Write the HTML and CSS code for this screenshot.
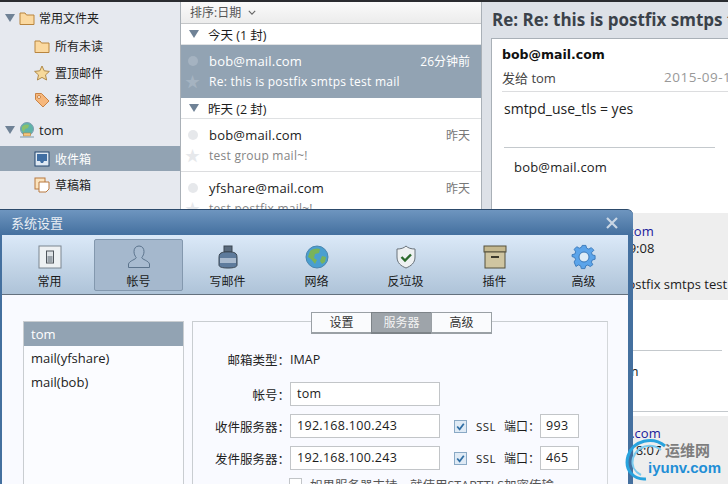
FILE: index.html
```html
<!DOCTYPE html>
<html lang="zh-CN">
<head>
    <meta charset="UTF-8">
    <meta name="viewport" content="width=device-width, initial-scale=1.0">
    <title>系统设置</title>
    <link rel="stylesheet" href="styles.css">
</head>
<body>
    <div class="app">
        <div class="sidebar">
            <div class="tree-row top-row">
                <span class="arrow"></span>
                <svg class="ico" viewBox="0 0 16 16"><path d="M1 3h5l1.500 2H15v9.500H1z" fill="#fbd9a0" stroke="#b8853f"/></svg>
                <span>常用文件夹</span>
            </div>
            <div class="tree-row child">
                <svg class="ico" viewBox="0 0 16 16"><path d="M1 3h5l1.500 2H15v9.500H1z" fill="#fbd9a0" stroke="#b8853f"/></svg>
                <span>所有未读</span>
            </div>
            <div class="tree-row child">
                <svg class="ico" viewBox="0 0 16 16"><path d="M8 1l2.200 4.800 5.200.6-3.900 3.500 1.100 5.100L8 12.400 3.400 15l1.100-5.100L.6 6.400l5.200-.6z" fill="#f7d99a" stroke="#b08a4a"/></svg>
                <span>置顶邮件</span>
            </div>
            <div class="tree-row child">
                <svg class="ico" viewBox="0 0 16 16"><path d="M1.500 1.500h6l7.500 7.500-6 6-7.500-7.500z" fill="#f6b77c" stroke="#c98345"/><circle cx="5" cy="5" r="1.500" fill="#fff" stroke="#c98345"/></svg>
                <span>标签邮件</span>
            </div>
            <div class="tree-row account">
                <span class="arrow"></span>
                <svg class="ico" viewBox="0 0 16 16"><circle cx="8" cy="7" r="6.500" fill="#5fb3a8" stroke="#7d9cb0"/><path d="M3 5c2-3 5-3 7-2l-1 3-3 1-1 3-2-2z" fill="#8ac06a"/><rect x="4.500" y="11" width="7" height="3" fill="#f4c77f" stroke="#b8853f" stroke-width=".6"/><path d="M1 15h14" stroke="#7d9cb0"/></svg>
                <span>tom</span>
            </div>
            <div class="tree-row child inbox">
                <svg class="ico" viewBox="0 0 16 16"><rect x="1" y="1" width="14" height="14" fill="#dfe9f3" stroke="#23466f"/><path d="M3 3h10v7h-3l-1 2H7l-1-2H3z" fill="#3f6ea3"/></svg>
                <span>收件箱</span>
            </div>
            <div class="tree-row child">
                <svg class="ico" viewBox="0 0 16 16"><rect x="1" y="1" width="10" height="11" fill="#fbe3bd" stroke="#b8793f"/><path d="M5 5h10v7l-3 3H5z" fill="#fff" stroke="#b8793f"/></svg>
                <span>草稿箱</span>
            </div>
        </div>

        <div class="list">
            <div class="sort-bar">排序:日期<svg class="chevron" viewBox="0 0 10 6"><path d="M1 1l4 4 4-4" fill="none" stroke="#666" stroke-width="1.400"/></svg></div>
            <div class="group"><span class="arrow"></span>今天 (1 封)</div>
            <div class="mail selected">
                <div class="mail-line">
                    <span class="dot"></span><span class="from">bob@mail.com</span><span class="when">26分钟前</span>
                </div>
                <div class="mail-line">
                    <span class="star">★</span><span class="subject">Re: this is postfix smtps test mail</span>
                </div>
            </div>
            <div class="group"><span class="arrow"></span>昨天 (2 封)</div>
            <div class="mail">
                <div class="mail-line">
                    <span class="dot"></span><span class="from">bob@mail.com</span><span class="when">昨天</span>
                </div>
                <div class="mail-line">
                    <span class="star">★</span><span class="subject">test group mail~!</span>
                </div>
            </div>
            <div class="mail">
                <div class="mail-line">
                    <span class="dot"></span><span class="from">yfshare@mail.com</span><span class="when">昨天</span>
                </div>
                <div class="mail-line">
                    <span class="star">★</span><span class="subject">test postfix mail~!</span>
                </div>
            </div>
        </div>

        <div class="reader">
            <div class="reader-title">Re: Re: this is postfix smtps test mail</div>
            <div class="card">
                <div class="sender">bob@mail.com</div>
                <div class="meta"><span>发给 tom</span><span class="date">2015-09-18 09:08</span></div>
                <div class="content">smtpd_use_tls = yes</div>
                <div class="sign">bob@mail.com</div>
                <div class="quote">
                    <div class="quote-from">bob@mail.com</div>
                    <div class="quote-date">2015-09-18 09:08</div>
                    <div class="quote-subject">Re: this is postfix smtps test</div>
                </div>
                <div class="content-two">
                    <div class="tail">tom</div>
                </div>
                <div class="quote second">
                    <div class="quote-from">bob@mail.com</div>
                    <div class="quote-date">2015-09-18 18:07</div>
                </div>
            </div>
        </div>
    </div>

    <div class="dialog">
        <div class="dialog-title">
            <span>系统设置</span>
            <svg class="close" viewBox="0 0 12 12"><path d="M1 1l10 10M11 1L1 11" stroke="#c9d6e4" stroke-width="2.200"/></svg>
        </div>
        <div class="toolbar">
            <div class="tool">
                <svg viewBox="0 0 24 24" class="tool-ico"><rect x="1" y="1" width="22" height="22" fill="#eef1f3" stroke="#7b8590"/><rect x="8.500" y="6" width="7" height="12" fill="#dfe3e6" stroke="#50565c"/><rect x="9.500" y="11" width="5" height="6" fill="#9aa2a9"/></svg>
                <span>常用</span>
            </div>
            <div class="tool active">
                <svg viewBox="0 0 24 24" class="tool-ico"><path d="M12 1c3.500 0 5 2.800 5 5.500 0 2.500-1 4.500-2.200 6 0 2 6.700 3 7.700 6.500v3.500H1.500V19c1-3.500 7.700-4.500 7.700-6.500C8 11 7 9 7 6.500 7 3.800 8.500 1 12 1z" fill="#a8bbd0" stroke="#5b738c"/></svg>
                <span>帐号</span>
            </div>
            <div class="tool">
                <svg viewBox="0 0 24 24" class="tool-ico"><rect x="8" y="1" width="8" height="6" fill="#5a6b7d" stroke="#3a4652"/><path d="M5 8c2-1.500 12-1.500 14 0 2 1 2 3 2 6v6c0 2-3 3-9 3s-9-1-9-3v-6c0-3 0-5 2-6z" fill="#5e7b9c" stroke="#3a4652"/><rect x="4" y="13" width="16" height="5" fill="#a9bace"/></svg>
                <span>写邮件</span>
            </div>
            <div class="tool">
                <svg viewBox="0 0 24 24" class="tool-ico"><circle cx="12" cy="12" r="11" fill="#4a9fd0" stroke="#4c86ae"/><path d="M5 6c3-3 8-3 10-2l-1 4-4 1-1 4 3 2-2 4-4-5-3-2z" fill="#79b35a"/><path d="M17 11l4 1-1 5-3 2-2-3z" fill="#79b35a"/></svg>
                <span>网络</span>
            </div>
            <div class="tool">
                <svg viewBox="0 0 24 24" class="tool-ico"><path d="M12 1c2 2 5 3 9 3v8c0 6-4 9-9 11-5-2-9-5-9-11V4c4 0 7-1 9-3z" fill="#eef1f2" stroke="#69727a"/><path d="M7.500 12l3.500 3.500 6-6" fill="none" stroke="#2c6a2c" stroke-width="2.400"/></svg>
                <span>反垃圾</span>
            </div>
            <div class="tool">
                <svg viewBox="0 0 24 24" class="tool-ico"><rect x="1" y="1" width="22" height="6" fill="#c4b88f" stroke="#55503c"/><rect x="2" y="7" width="20" height="16" fill="#cfc5a1" stroke="#55503c"/><rect x="8" y="11" width="8" height="2" fill="#3d3a2d"/></svg>
                <span>插件</span>
            </div>
            <div class="tool">
                <svg viewBox="0 0 24 24" class="tool-ico"><path d="M10 1h4l.8 3 2.400 1 2.700-1.600 2.800 2.800L20.100 9l1 2.400 2.900.6v4l-3 .8-1 2.400 1.600 2.700-2.800 2.100-2.700-1.700-2.300 1-.8 2.900h-4l-.7-3-2.400-1-2.700 1.700L1.200 19l1.600-2.700-1-2.300L-1 13.200V11l2.900-.6 1-2.400L1.300 5.200l2.800-2.800L6.800 4l2.400-1z" transform="translate(1 -.5) scale(.92)" fill="#5ba4ea" stroke="#3a78b8"/><circle cx="12" cy="12" r="5" fill="#dcebf7" stroke="#3a78b8"/></svg>
                <span>高级</span>
            </div>
        </div>
        <div class="dialog-body">
            <div class="accounts">
                <div class="account-item current">tom</div>
                <div class="account-item">mail(yfshare)</div>
                <div class="account-item">mail(bob)</div>
            </div>
            <div class="settings">
                <div class="tabs">
                    <div class="tab">设置</div>
                    <div class="tab current">服务器</div>
                    <div class="tab">高级</div>
                </div>
                <div class="form">
                    <div class="form-row type-row"><label>邮箱类型：</label><span>IMAP</span></div>
                    <div class="form-row"><label>帐号：</label><div class="field">tom</div></div>
                    <div class="form-row">
                        <label>收件服务器：</label><div class="field">192.168.100.243</div>
                        <span class="check"><svg viewBox="0 0 10 10"><path d="M2 5l2.200 2.500L8 2.500" fill="none" stroke="#2f6ea5" stroke-width="1.600"/></svg></span>
                        <span class="ssl">SSL</span><span class="port-label">端口：</span><div class="field port">993</div>
                    </div>
                    <div class="form-row">
                        <label>发件服务器：</label><div class="field">192.168.100.243</div>
                        <span class="check"><svg viewBox="0 0 10 10"><path d="M2 5l2.200 2.500L8 2.500" fill="none" stroke="#2f6ea5" stroke-width="1.600"/></svg></span>
                        <span class="ssl">SSL</span><span class="port-label">端口：</span><div class="field port">465</div>
                    </div>
                    <div class="form-row tls-row"><span class="check empty"></span><span>如果服务器支持，就使用STARTTLS加密传输</span></div>
                </div>
            </div>
        </div>
    </div>

    <div class="watermark">
        <svg class="swirl" viewBox="0 0 44 44"><path d="M40 8C28-2 8 2 3 18c-4 14 6 24 18 23" fill="none" stroke="#29a3de" stroke-width="3"/><path d="M36 12C26 4 12 8 8 20c-2 8 2 14 8 17" fill="none" stroke="#7ccbef" stroke-width="2"/></svg>
        <span class="wm-cn">运维网</span>
        <span class="wm-en">iyunv.com</span>
    </div>
</body>
</html>
```

FILE: styles.css
```css
* {
    box-sizing: border-box;
}
html, body {
    margin: 0;
    height: 100%;
    overflow: hidden;
}
body {
    font-family: "Open Sans", "Noto Sans CJK SC", sans-serif;
    font-size: 13px;
    color: #1c1c1c;
    background: #fff;
}
.app {
    display: flex;
    height: 484px;
    border-top: 2px solid #2a2c30;
}
.arrow {
    width: 0;
    height: 0;
    flex: none;
    border-left: 5px solid transparent;
    border-right: 5px solid transparent;
    border-top: 8px solid #6f8296;
}
.sidebar {
    width: 181px;
    flex: none;
    background: #e6e9ef;
    border-right: 1px solid #a9b0b7;
    padding-top: 2px;
    font-size: 12px;
}
.tree-row {
    display: flex;
    align-items: center;
    height: 27px;
    padding-left: 5px;
    gap: 4px;
}
.tree-row .ico {
    width: 16px;
    height: 16px;
    flex: none;
}
.tree-row.top-row {
    height: 27px;
    margin-bottom: 1px;
}
.tree-row.child {
    padding-left: 34px;
    gap: 5px;
}
.tree-row.account {
    height: 33px;
    font-size: 13px;
}
.tree-row.inbox {
    height: 25px;
    background: #92a3b3;
    color: #fff;
}
.list {
    width: 301px;
    flex: none;
    background: #fff;
    border-right: 1px solid #a9b0b7;
}
.sort-bar {
    height: 22px;
    padding-left: 9px;
    line-height: 21px;
    color: #555;
    font-size: 12px;
    background: linear-gradient(#fafafa, #ececec);
    border-bottom: 1px solid #c4c6c8;
}
.chevron {
    width: 8px;
    height: 5px;
    margin-left: 7px;
    vertical-align: 2px;
}
.group {
    display: flex;
    align-items: center;
    gap: 9px;
    height: 21px;
    padding-left: 8px;
    border-bottom: 1px solid #dfe1e3;
    font-size: 12.5px;
}
.mail {
    height: 53px;
    padding-top: 6px;
    border-bottom: 1px solid #dcdddf;
}
.mail.selected {
    height: 53px;
    background: #92a3b3;
    color: #fff;
    border-bottom: none;
}
.mail-line {
    display: flex;
    align-items: center;
    height: 20px;
    padding-right: 11px;
}
.dot {
    width: 10px;
    height: 10px;
    margin-left: 7px;
    margin-right: 11px;
    border-radius: 50%;
    background: #e6e8eb;
}
.star {
    width: 16px;
    margin-left: 4px;
    margin-right: 8px;
    font-size: 15px;
    line-height: 20px;
    color: #e6e8eb;
}
.from {
    flex: 1;
    letter-spacing: .2px;
}
.when {
    color: #777;
    font-size: 12px;
}
.subject {
    color: #858585;
    font-size: 12px;
    letter-spacing: .25px;
}
.selected .star {
    color: #a5b3c1;
}
.selected .dot {
    background: #a5b3c1;
}
.selected .when,
.selected .subject {
    color: #fff;
}
.reader {
    flex: 1;
    min-width: 0;
    background: #dde1e7;
    overflow: hidden;
}
.reader-title {
    height: 36px;
    padding-left: 10px;
    line-height: 35px;
    font-size: 17px;
    font-weight: 700;
    color: #3b424a;
    white-space: nowrap;
}
.card {
    margin-left: 9px;
    height: 460px;
    padding: 0 0 0 10px;
    background: #fff;
    border-top: 1px solid #a9b0b7;
    border-left: 1px solid #a9b0b7;
}
.sender {
    padding-top: 8px;
    font-family: "DejaVu Sans", sans-serif;
    font-size: 12.5px;
    font-weight: 700;
    color: #111;
}
.meta {
    display: flex;
    justify-content: space-between;
    margin-top: 6px;
    padding-bottom: 4px;
    border-bottom: 1px solid #dcdddf;
    white-space: nowrap;
    color: #444;
}
.date {
    width: 64px;
    color: #999;
    font-size: 13.5px;
    letter-spacing: .5px;
    overflow: hidden;
}
.content {
    padding: 7px 0 0 2px;
    height: 55px;
    color: #222;
    font-size: 14px;
}
.sign {
    margin-left: 2px;
    margin-right: 13px;
    padding: 10px 0 0 10px;
    height: 66px;
    border-top: 1px solid #c4c9cd;
    letter-spacing: .2px;
}
.quote {
    margin-left: -10px;
    height: 87px;
    padding: 10px 0 0 71px;
    background: #eeeeee;
    white-space: nowrap;
    line-height: 17px;
}
.quote-from {
    color: #1a1a9a;
}
.quote-date {
    margin-left: -13px;
}
.quote-subject {
    margin-top: 19px;
    margin-left: -4px;
}
.content-two {
    height: 112px;
    margin-left: 62px;
    padding-top: 50px;
    border-bottom: 1px solid #c4c9cd;
}
.tail {
    margin-right: 6px;
    padding: 11px 0 0 50px;
    border-top: 1px solid #c4c9cd;
    line-height: 18px;
}
.quote.second {
    margin-top: 4px;
    padding-left: 78px;
    padding-top: 9px;
}
.dialog {
    position: absolute;
    left: 0;
    top: 209px;
    width: 633px;
    height: 275px;
    padding: 0 5px 0 2px;
    background: #44709f;
    border-radius: 0 6px 0 0;
    border-top: 1px solid #2c4a6b;
    overflow: hidden;
}
.dialog-title {
    display: flex;
    justify-content: space-between;
    align-items: center;
    height: 25px;
    margin: 0 -5px 0 -2px;
    padding: 0 15px 0 11px;
    background: linear-gradient(#6e95bf, #44709f);
    color: #e9eef4;
    font-size: 13px;
}
.close {
    width: 12px;
    height: 12px;
}
.toolbar {
    display: flex;
    height: 60px;
    padding: 4px 0 0 3px;
    background: linear-gradient(#dbe9f8, #aec3d8);
    border-bottom: 1px solid #64717e;
}
.tool {
    display: flex;
    flex-direction: column;
    align-items: center;
    width: 89px;
    height: 52px;
    padding-top: 5px;
    color: #1a1a1a;
    font-size: 12px;
    gap: 3px;
    border: 1px solid transparent;
    border-radius: 2px;
}
.tool.active {
    background: #a5b8cd;
    border-color: #8398ae;
}
.tool-ico {
    width: 24px;
    height: 24px;
    overflow: visible;
}
.dialog-body {
    display: flex;
    height: 190px;
    padding: 26px 0 0 21px;
    background: #f9faff;
}
.accounts {
    width: 161px;
    height: 200px;
    background: #fbfcff;
    border: 1px solid #c9cdd1;
}
.account-item {
    height: 24px;
    padding-left: 7px;
    line-height: 24px;
    color: #222;
}
.account-item.current {
    background: #92a3b3;
    color: #fff;
}
.settings {
    position: relative;
    width: 416px;
    height: 200px;
    margin-left: 8px;
    border: 1px solid #c9cdd1;
    border-right-color: #d4d7da;
}
.tabs {
    position: absolute;
    top: -10px;
    left: 119px;
    display: flex;
}
.tab {
    width: 61px;
    height: 22px;
    line-height: 20px;
    text-align: center;
    background: #fafbfd;
    border: 1px solid #9aa0a5;
    border-bottom-width: 2px;
    margin-left: -1px;
    color: #333;
    font-size: 12px;
}
.tab.current {
    background: #9ea4aa;
    color: #f3f3f3;
    border-color: #7d8388;
}
.form {
    padding-top: 25px;
}
.form-row {
    display: flex;
    align-items: center;
    height: 24px;
    margin-bottom: 8px;
    font-size: 12.5px;
}
.form-row label {
    width: 97px;
    flex: none;
    text-align: right;
    color: #222;
}
.form-row.type-row {
    margin-bottom: 11px;
}
.type-row span {
    color: #222;
}
.field {
    width: 150px;
    height: 24px;
    flex: none;
    line-height: 22px;
    padding-left: 6px;
    background: #fff;
    border: 1px solid #c2c5c8;
    font-size: 12.5px;
    letter-spacing: .3px;
}
.check {
    display: flex;
    width: 13px;
    height: 13px;
    flex: none;
    margin-left: 14px;
    background: #dfeaf5;
    border: 1px solid #8aa9c5;
}
.ssl {
    margin-left: 9px;
    width: 28px;
    flex: none;
    font-size: 11.5px;
    letter-spacing: .5px;
}
.port-label {
    width: 36px;
    flex: none;
    font-size: 12px;
    white-space: nowrap;
}
.field.port {
    width: 39px;
    padding-left: 5px;
}
.tls-row {
    margin-top: -6px;
    padding-left: 96px;
    color: #555;
    gap: 8px;
    white-space: nowrap;
}
.check.empty {
    margin-left: 0;
    background: #fff;
    border-color: #c2c5c8;
}
.watermark {
    position: absolute;
    left: 625px;
    top: 438px;
    width: 103px;
    height: 46px;
}
.swirl {
    position: absolute;
    left: 0;
    top: 0;
    width: 44px;
    height: 44px;
}
.wm-cn {
    position: absolute;
    left: 40px;
    top: 1px;
    font-size: 15px;
    color: #7d7d7d;
    font-weight: 700;
}
.wm-en {
    position: absolute;
    left: 23px;
    top: 21px;
    font-family: "Liberation Sans", sans-serif;
    font-weight: 700;
    font-size: 15px;
    color: #1f8fd6;
}
```
